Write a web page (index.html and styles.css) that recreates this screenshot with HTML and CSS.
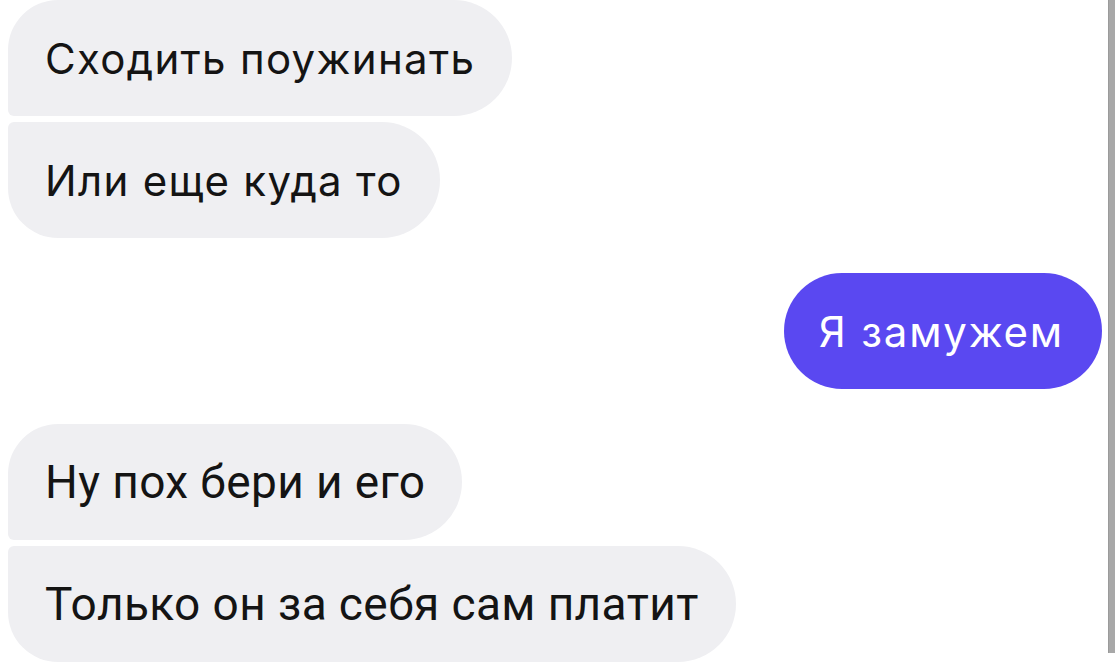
FILE: index.html
```html
<!DOCTYPE html>
<html>
<head>
    <title>Чат</title>
    <link rel="stylesheet" href="styles.css">
</head>
<body>
    <div class="screen">
        <div class="chat">
            <div class="group incoming">
                <div class="bubble first">Сходить поужинать</div>
                <div class="bubble last">Или еще куда то</div>
            </div>

            <div class="group outgoing">
                <div class="bubble single">Я замужем</div>
            </div>

            <div class="group incoming alt">
                <div class="bubble first">Ну пох бери и его</div>
                <div class="bubble last">Только он за себя сам платит</div>
            </div>
        </div>
        <div class="scrollbar"></div>
    </div>
</body>
</html>
```

FILE: styles.css
```css
/* Chat thread with a scrollbar strip on the right */
body {
    margin: 0;
    background-color: #ffffff;
    font-family: Inter, 'Noto Sans', sans-serif;
}

.screen {
    display: flex;
    width: 1116px;
    height: 672px;
    overflow: hidden;
}

.chat {
    flex: 1;
    display: flex;
    flex-direction: column;
    gap: 35px;
    padding: 0 6px 0 8px;
}

.group {
    display: flex;
    flex-direction: column;
    gap: 6px;
}

.incoming {
    align-items: flex-start;
}

.outgoing {
    align-items: flex-end;
}

.bubble {
    height: 116px;
    display: flex;
    align-items: center;
    padding: 0 37px;
    box-sizing: border-box;
    font-size: 42px;
    letter-spacing: 1.3px;
    white-space: nowrap;
}

.incoming .bubble {
    background-color: #efeff2;
    color: #141414;
}

/* corners that touch the next bubble in the group stay almost square */
.incoming .first {
    border-radius: 50px 58px 58px 6px;
}

.incoming .last {
    border-radius: 6px 58px 58px 50px;
}

.outgoing .bubble {
    background-color: #5a48f1;
    color: #ffffff;
    border-radius: 58px;
    padding: 0 38px 0 35px;
    letter-spacing: 1.8px;
}

/* the lower messages came from a narrower font */
.alt .bubble {
    font-family: Roboto, 'Noto Sans', sans-serif;
    font-size: 46px;
    letter-spacing: 0.4px;
}

.scrollbar {
    width: 7px;
    height: 653px;
    margin-right: 1px;
    background-color: #a8a8a8;
    border-left: 1px solid #9a9a9a;
    box-sizing: border-box;
}
```
